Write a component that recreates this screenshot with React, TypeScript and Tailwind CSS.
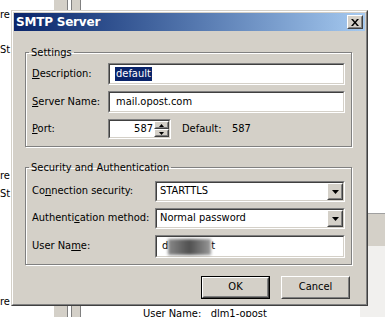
import React from "react";

const font = "font-['DejaVu_Sans_Condensed','DejaVu_Sans',sans-serif]";

function Sunken({ className = "", children }: { className?: string; children?: React.ReactNode }) {
  return (
    <div className={`border border-t-[#808080] border-l-[#808080] border-b-white border-r-white ${className}`}>
      <div className="h-full flex items-center bg-white border border-t-[#404040] border-l-[#404040] border-b-[#d4d0c8] border-r-[#d4d0c8]">
        {children}
      </div>
    </div>
  );
}

function Raised({ className = "", inner = "", children }: { className?: string; inner?: string; children?: React.ReactNode }) {
  return (
    <div className={`border border-t-white border-l-white border-b-[#404040] border-r-[#404040] bg-[#d4d0c8] ${className}`}>
      <div className={`h-full flex items-center justify-center border border-t-[#d4d0c8] border-l-[#d4d0c8] border-b-[#808080] border-r-[#808080] ${inner}`}>
        {children}
      </div>
    </div>
  );
}

function Arrow() {
  return (
    <svg width="7" height="4" viewBox="0 0 7 4">
      <path d="M0 0 L7 0 L3.5 4 Z" fill="#000" />
    </svg>
  );
}

function Select({ value }: { value: string }) {
  return (
    <Sunken className="w-[190px] h-[21px]">
      <span className="pl-[3px] flex-1">{value}</span>
      <Raised className="w-[16px] h-[17px]">
        <Arrow />
      </Raised>
    </Sunken>
  );
}

function Group({ title, className = "", children }: { title: string; className?: string; children: React.ReactNode }) {
  return (
    <fieldset
      className={`border border-[#808080] shadow-[inset_1px_1px_0_#fff,1px_1px_0_#fff] px-[6px] ${className}`}
    >
      <legend className="ml-[-3px] px-[2px] leading-[13px]">{title}</legend>
      {children}
    </fieldset>
  );
}

export default function App() {
  return (
    <div className={`relative w-[385px] h-[317px] overflow-hidden bg-white text-[11px] text-black ${font}`}>
      {/* underlying window fragments */}
      <div className="absolute left-0 top-[8px] leading-[13px]">re</div>
      <div className="absolute left-0 top-[43px] leading-[13px]">St</div>
      <div className="absolute left-0 top-[169px] leading-[13px]">re</div>
      <div className="absolute left-0 top-[187px] leading-[13px]">St</div>
      <div className="absolute left-0 top-[295px] leading-[13px]">re</div>
      <div className="absolute left-[54px] top-0 h-[12px] w-[14px] bg-[#d4d0c8] border-r border-[#808080]" />
      <div className="absolute left-[71px] top-0 h-[12px] w-[10px] bg-[#d4d0c8] border-l border-r border-[#808080]" />
      <div className="absolute left-[54px] top-[300px] h-[17px] w-[14px] bg-[#d4d0c8] border-r border-[#808080]" />
      <div className="absolute left-[71px] top-[300px] h-[17px] w-[10px] bg-[#d4d0c8] border-l border-r border-[#808080]" />
      <div className="absolute left-[143px] top-[307px] leading-[13px]">User Name:&nbsp;&nbsp; dlm1-opost</div>
      <div className="absolute left-[360px] top-[213px] w-[25px] h-[33px] bg-[#d4d0c8] border-t border-[#a0a0a0]" />
      <div className="absolute left-[360px] top-[246px] w-[25px] h-[71px] bg-[#f1f0ee]" />

      {/* dialog */}
      <div className="absolute left-[11px] top-[10px] w-[357px] h-[296px] border border-t-[#d4d0c8] border-l-[#d4d0c8] border-b-[#404040] border-r-[#404040] bg-[#d4d0c8]">
        <div className="h-full flex flex-col border border-t-white border-l-white border-b-[#808080] border-r-[#808080] p-[1px]">
          <div className="h-[18px] flex items-center justify-between bg-gradient-to-r from-[#0a246a] to-[#a6caf0] pl-[2px] pr-[2px]">
            <span className="font-bold text-white text-[12px] font-['DejaVu_Sans',sans-serif] tracking-[-0.2px]">SMTP Server</span>
            <Raised className="w-[16px] h-[14px]">
              <svg width="8" height="7" viewBox="0 0 8 7">
                <path d="M0 0 L2 0 L4 2.5 L6 0 L8 0 L5 3.5 L8 7 L6 7 L4 4.5 L2 7 L0 7 L3 3.5 Z" fill="#000" />
              </svg>
            </Raised>
          </div>

          <div className="flex-1 flex flex-col pl-[11px] pr-[13px] pt-[15px]">
            <Group title="Settings" className="pt-[4px] pb-[7px]">
              <div className="flex flex-col gap-[6px]">
                <div className="flex items-center">
                  <span className="w-[76px]">
                    <u>D</u>escription:
                  </span>
                  <Sunken className="flex-1 h-[22px]">
                    <span className="ml-[5px] px-[1px] bg-[#0a246a] text-white leading-[14px]">default</span>
                  </Sunken>
                </div>
                <div className="flex items-center">
                  <span className="w-[76px]">
                    <u>S</u>erver Name:
                  </span>
                  <Sunken className="flex-1 h-[22px]">
                    <span className="ml-[6px]">mail.opost.com</span>
                  </Sunken>
                </div>
                <div className="flex items-center">
                  <span className="w-[76px]">
                    <u>P</u>ort:
                  </span>
                  <Sunken className="w-[63px] h-[20px]">
                    <span className="w-[45px] text-right pr-[1px]">587</span>
                    <div className="flex flex-col">
                      <Raised className="w-[15px] h-[8px]">
                        <svg width="5" height="3" viewBox="0 0 5 3"><path d="M2.5 0 L5 3 L0 3 Z" fill="#000" /></svg>
                      </Raised>
                      <Raised className="w-[15px] h-[8px]">
                        <svg width="5" height="3" viewBox="0 0 5 3"><path d="M0 0 L5 0 L2.5 3 Z" fill="#000" /></svg>
                      </Raised>
                    </div>
                  </Sunken>
                  <span className="ml-[11px] w-[50px]">Default:</span>
                  <span>587</span>
                </div>
              </div>
            </Group>

            <Group title="Security and Authentication" className="mt-[14px] pt-[7px] pb-[6px]">
              <div className="flex flex-col gap-[6px]">
                <div className="flex items-center">
                  <span className="w-[123px]">
                    Co<u>n</u>nection security:
                  </span>
                  <Select value="STARTTLS" />
                </div>
                <div className="flex items-center">
                  <span className="w-[123px]">
                    Authenti<u>c</u>ation method:
                  </span>
                  <Select value="Normal password" />
                </div>
                <div className="flex items-center">
                  <span className="w-[123px]">
                    User Na<u>m</u>e:
                  </span>
                  <Sunken className="w-[190px] h-[23px]">
                    <span className="ml-[5px]">d</span>
                    <span className="w-[43px] h-[16px] bg-gradient-to-r from-[#8a8a8a] via-[#505050] to-[#9a9a9a] blur-[1.5px]" />
                    <span>t</span>
                  </Sunken>
                </div>
              </div>
            </Group>

            <div className="flex justify-end gap-[11px] mt-[11px] pr-[2px]">
              <div className="border border-black">
                <Raised className="w-[67px] h-[21px]">OK</Raised>
              </div>
              <Raised className="w-[69px] h-[23px]">Cancel</Raised>
            </div>
          </div>
        </div>
      </div>
    </div>
  );
}
